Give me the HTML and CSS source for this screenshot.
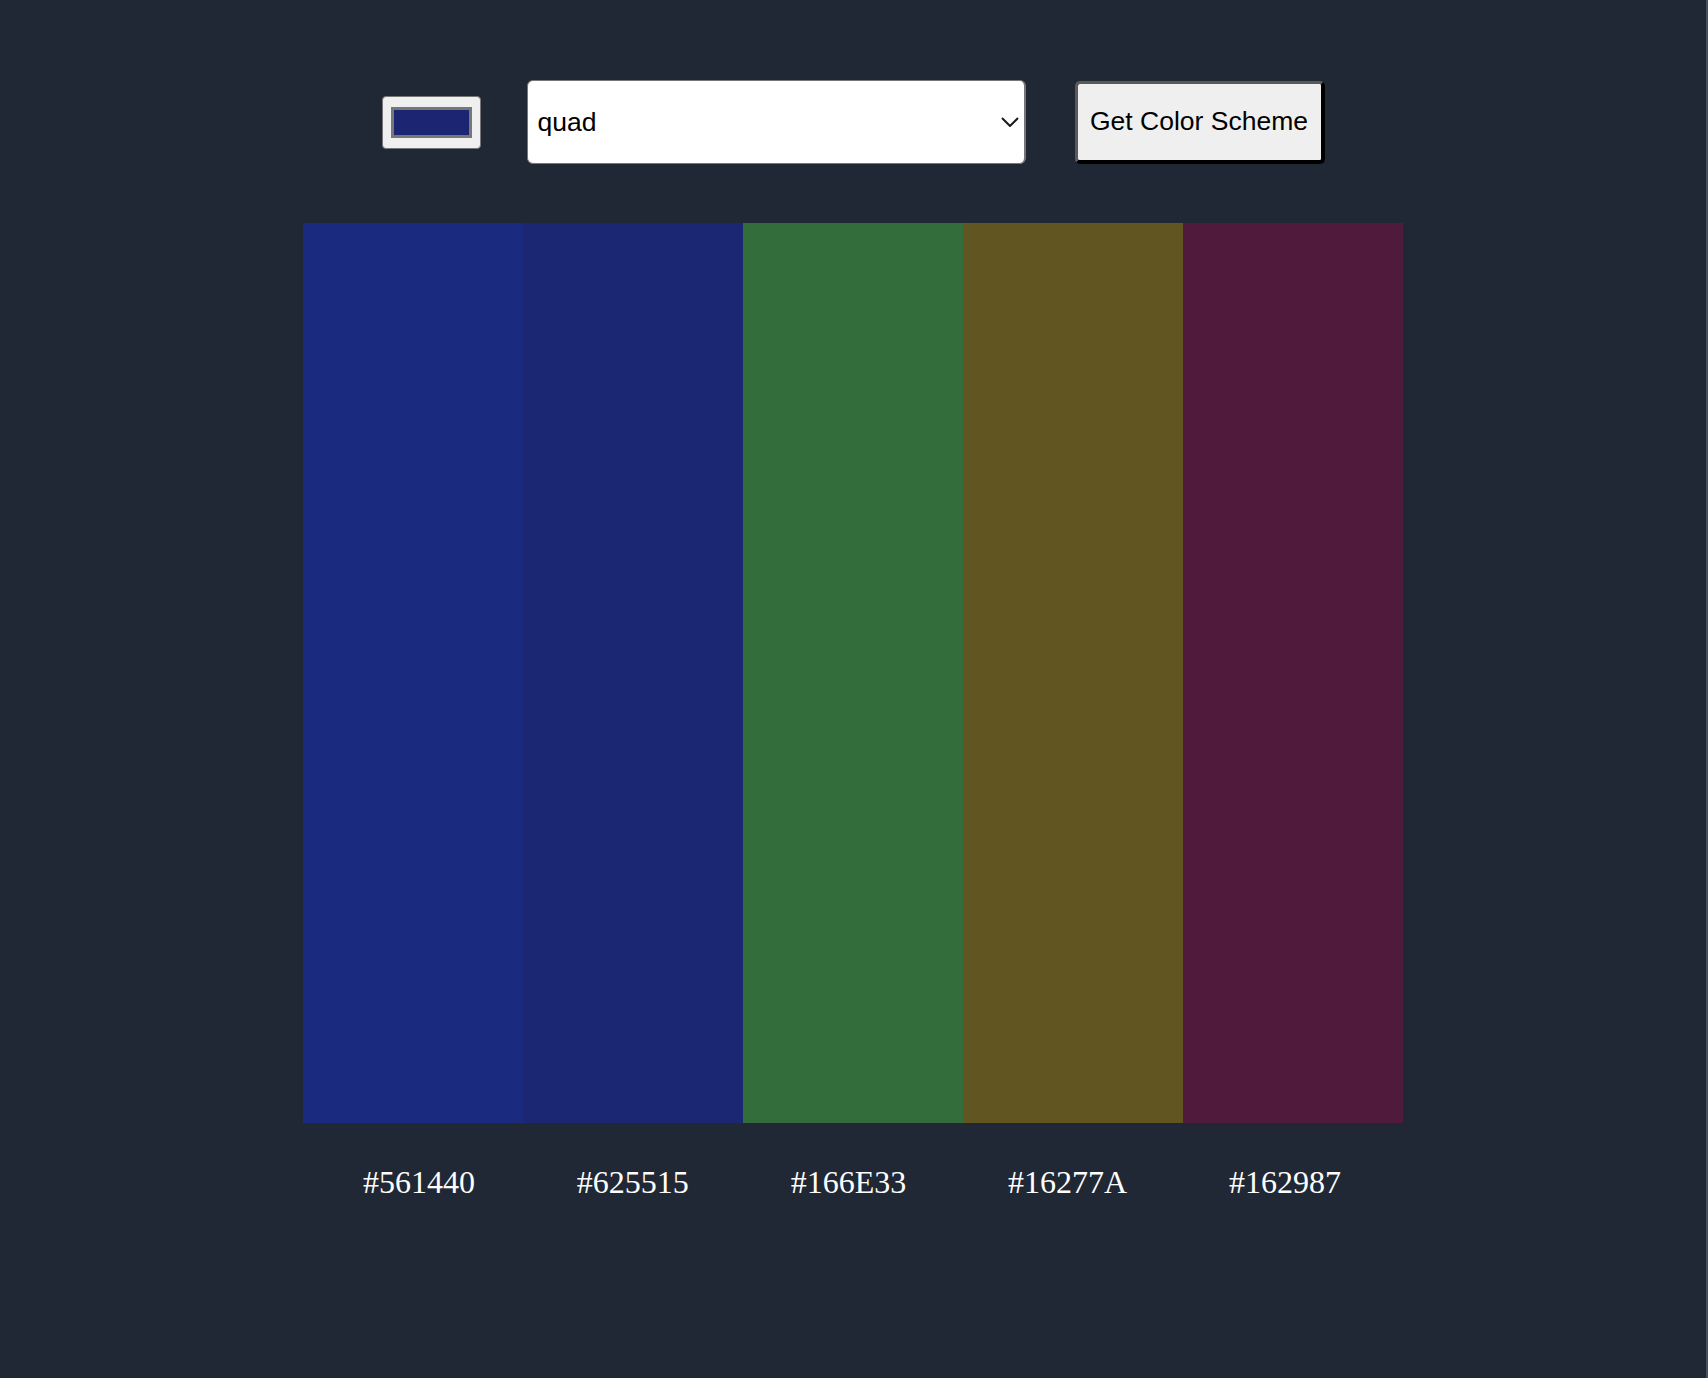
FILE: index.html
```html
<!DOCTYPE html>
<html lang="en">
<head>
<meta charset="utf-8">
<title>Color Scheme</title>
<link rel="stylesheet" href="styles.css">
</head>
<body>
<div class="page">
  <form class="controls">
    <input class="color-input" type="color" value="#1b2572">
    <div class="select-wrap">
      <select class="mode-select">
        <option>quad</option>
      </select>
      <svg class="chevron" width="18" height="10" viewBox="0 0 18 10" aria-hidden="true"><path d="M1 1 L9 9 L17 1" fill="none" stroke="#1a1a1a" stroke-width="2"/></svg>
    </div>
    <button class="get-btn" type="button">Get Color Scheme</button>
  </form>
  <div class="swatches">
    <div class="swatch s1"></div>
    <div class="swatch s2"></div>
    <div class="swatch s3"></div>
    <div class="swatch s4"></div>
    <div class="swatch s5"></div>
  </div>
  <div class="labels">
    <span class="label">#561440</span>
    <span class="label">#625515</span>
    <span class="label">#166E33</span>
    <span class="label">#16277A</span>
    <span class="label">#162987</span>
  </div>
</div>
</body>
</html>
```
FILE: styles.css
```css
html, body {
  margin: 0;
  padding: 0;
  background: #212835;
}
body {
  font-family: "Liberation Serif", "Times New Roman", serif;
}
.page {
  box-sizing: border-box;
  width: 1708px;
  min-height: 1378px;
  border-right: 2px solid #4a5260;
  display: flex;
  flex-direction: column;
  align-items: center;
}
.controls {
  display: flex;
  align-items: center;
  margin: 80px 0 0 0;
}
.color-input {
  -webkit-appearance: none;
  appearance: none;
  box-sizing: border-box;
  width: 99px;
  height: 53px;
  margin: 0 46px 0 0;
  padding: 0;
  border: 1px solid #767676;
  border-radius: 4px;
  background: #efefef;
}
.color-input::-webkit-color-swatch-wrapper {
  padding: 10px 8px;
}
.color-input::-webkit-color-swatch {
  border: 3px solid #777777;
  border-radius: 0;
}
.select-wrap {
  position: relative;
  margin-right: 49px;
}
.mode-select {
  -webkit-appearance: none;
  appearance: none;
  box-sizing: border-box;
  width: 499px;
  height: 84px;
  margin: 0;
  padding: 0 40px 0 10px;
  border: 1px solid #767676;
  border-right-width: 2px;
  border-radius: 6px;
  background: #ffffff;
  color: #000000;
  font-family: "Liberation Sans", Arial, sans-serif;
  font-size: 26.5px;
}
.chevron {
  position: absolute;
  right: 7px;
  top: 37px;
  pointer-events: none;
}
.get-btn {
  box-sizing: border-box;
  width: 250px;
  height: 83px;
  margin: 0;
  padding: 0;
  border-style: solid;
  border-width: 3px 4px 4px 3px;
  border-color: #5a5a5a #000000 #000000 #5a5a5a;
  border-radius: 5px;
  background: #efefef;
  color: #000000;
  font-family: "Liberation Sans", Arial, sans-serif;
  font-size: 26.5px;
}
.swatches {
  display: flex;
  width: 1100px;
  height: 900px;
  margin-top: 59px;
}
.swatch {
  flex: 1 1 0;
}
.s1 { background: #1a2a7e; }
.s2 { background: #1b2773; }
.s3 { background: #336d3b; }
.s4 { background: #615521; }
.s5 { background: #4f1a3c; }
.labels {
  box-sizing: border-box;
  display: flex;
  justify-content: space-between;
  width: 1100px;
  margin-top: 41px;
  padding: 0 62px 0 60px;
}
.label {
  color: #ffffff;
  font-size: 32px;
}
```
